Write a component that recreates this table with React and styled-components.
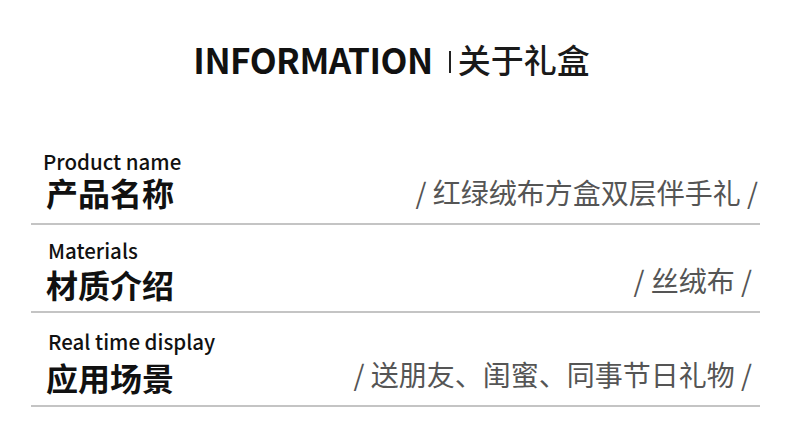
import React from 'react';
import styled, { createGlobalStyle } from 'styled-components';

const GlobalStyle = createGlobalStyle`
  html, body {
    margin: 0;
    padding: 0;
    background: #fff;
  }
  body {
    font-family: "Noto Sans CJK SC", "Noto Sans", sans-serif;
    color: #111;
  }
`;

const Page = styled.div`
  width: 790px;
  height: 429px;
  background: #fff;
  overflow: hidden;
`;

const Header = styled.header`
  display: flex;
  align-items: center;
  justify-content: center;
  height: 125px;
  box-sizing: border-box;
  padding: 0 7px 8px 0;
`;

const Heading = styled.h1`
  margin: 0;
  font-size: 35px;
  font-weight: 700;
  letter-spacing: -0.5px;
  color: #111;
  line-height: 1;
`;

const Divider = styled.span`
  width: 2px;
  height: 22px;
  background: #222;
  margin: 6px 7px 0 16px;
`;

const HeadingCn = styled.span`
  font-size: 33px;
  font-weight: 500;
  color: #1a1a1a;
  line-height: 1;
  margin-top: 2px;
`;

const List = styled.section`
  padding: 0 30px 0 31px;
`;

const Row = styled.div`
  display: flex;
  align-items: flex-end;
  justify-content: space-between;
  height: ${p => p.$h}px;
  padding-bottom: ${p => p.$pb}px;
  box-sizing: border-box;
  border-bottom: 2px solid #c4c4c4;
`;

const Label = styled.div`
  display: flex;
  flex-direction: column;
  padding-left: 15px;
  gap: ${p => p.$gap}px;
`;

const LabelEn = styled.span`
  font-size: 20.5px;
  font-weight: 500;
  line-height: 24px;
  color: #111;
  margin-left: ${p => p.$shift}px;
`;

const LabelCn = styled.span`
  font-size: 32px;
  font-weight: 700;
  line-height: 38px;
  color: #111;
`;

const Value = styled.div`
  font-size: 28px;
  font-weight: 400;
  line-height: 38px;
  color: #555;
  padding: 0 ${p => p.$pr}px ${p => p.$lift}px 0;
  white-space: nowrap;
`;

const rows = [
  { en: 'Product name', cn: '产品名称', value: '/ 红绿绒布方盒双层伴手礼 /', h: 100, pb: 12, gap: 0, shift: -3, pr: 2, lift: 0 },
  { en: 'Materials', cn: '材质介绍', value: '/ 丝绒布 /', h: 88, pb: 8, gap: 3, shift: 2, pr: 8, lift: 4 },
  { en: 'Real time display', cn: '应用场景', value: '/ 送朋友、闺蜜、同事节日礼物 /', h: 94, pb: 9, gap: 5, shift: 2, pr: 8, lift: 3 },
];

export default function App() {
  return (
    <Page>
      <GlobalStyle />
      <Header>
        <Heading>INFORMATION</Heading>
        <Divider />
        <HeadingCn>关于礼盒</HeadingCn>
      </Header>
      <List>
        {rows.map(r => (
          <Row key={r.en} $h={r.h} $pb={r.pb}>
            <Label $gap={r.gap}>
              <LabelEn $shift={r.shift}>{r.en}</LabelEn>
              <LabelCn>{r.cn}</LabelCn>
            </Label>
            <Value $pr={r.pr} $lift={r.lift}>{r.value}</Value>
          </Row>
        ))}
      </List>
    </Page>
  );
}
